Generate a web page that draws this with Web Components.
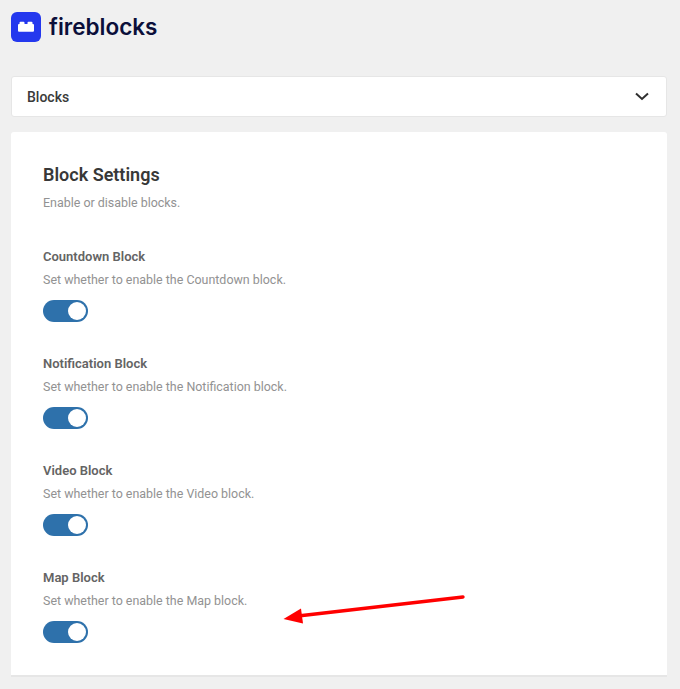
<!DOCTYPE html>
<html>
<head>
<meta charset="utf-8">
<title>Fireblocks</title>
<style>
    html, body { margin: 0; background: #f0f0f0; }
    body { font-family: Roboto, "Liberation Sans", sans-serif; }
</style>
</head>
<body>
<fb-page>
    <fb-logo></fb-logo>
    <fb-select label="Blocks"></fb-select>
    <fb-card heading="Block Settings" note="Enable or disable blocks.">
        <fb-toggle-row label="Countdown Block" note="Set whether to enable the Countdown block."></fb-toggle-row>
        <fb-toggle-row label="Notification Block" note="Set whether to enable the Notification block."></fb-toggle-row>
        <fb-toggle-row label="Video Block" note="Set whether to enable the Video block."></fb-toggle-row>
        <fb-toggle-row label="Map Block" note="Set whether to enable the Map block."></fb-toggle-row>
    </fb-card>
</fb-page>
<script>
class FbPage extends HTMLElement {
    constructor() {
        super();
        this.attachShadow({ mode: 'open' });
        this.shadowRoot.innerHTML = `
            <style>
                :host { display: flex; flex-direction: column; height: 689px; box-sizing: border-box; padding: 12px 13px 0 11px; position: relative; overflow: hidden; }
                svg { position: absolute; left: 0; top: 0; pointer-events: none; }
            </style>
            <slot></slot>
            <svg width="680" height="689" viewBox="0 0 680 689">
                <path d="M463 597 L298 616" stroke="#ff0000" stroke-width="3.4" stroke-linecap="round" fill="none"/>
                <path d="M283.500 619 L301 608.500 L303 623.500 Z" fill="#ff0000"/>
            </svg>
        `;
    }
}
customElements.define('fb-page', FbPage);

class FbLogo extends HTMLElement {
    constructor() {
        super();
        this.attachShadow({ mode: 'open' });
        this.shadowRoot.innerHTML = `
            <style>
                :host { display: flex; align-items: center; gap: 8px; height: 30px; }
                span { font: 600 22.500px/30px Inter, "Noto Sans", sans-serif; color: #0b0f3a; }
                svg { display: block; }
            </style>
            <svg width="30" height="30" viewBox="0 0 30 30">
                <rect width="30" height="30" rx="6" fill="#2438ee"/>
                <path d="M7 13 Q7 12 8 12 H8.500 V10.700 Q8.500 9.700 9.500 9.700 H12.500 Q13.500 9.700 13.500 10.700 V12 H16.500 V10.700 Q16.500 9.700 17.500 9.700 H20.500 Q21.500 9.700 21.500 10.700 V12 H22 Q23 12 23 13 V18.700 Q23 19.700 22 19.700 H8 Q7 19.700 7 18.700 Z" fill="#fff"/>
            </svg>
            <span>fireblocks</span>
        `;
    }
}
customElements.define('fb-logo', FbLogo);

class FbSelect extends HTMLElement {
    constructor() {
        super();
        this.attachShadow({ mode: 'open' });
        this.shadowRoot.innerHTML = `
            <style>
                :host { display: flex; align-items: center; justify-content: space-between; box-sizing: border-box; height: 41px; margin-top: 34px; padding: 0 17px 0 15px; background: #fff; border: 1px solid #e6e6e6; border-radius: 3px; }
                span { font: 500 14px/1 Roboto, sans-serif; color: #3a3a3a; }
                svg { display: block; }
            </style>
            <span>${this.getAttribute('label')}</span>
            <svg width="14" height="9" viewBox="0 0 14 9"><path d="M1 1.500 L7 7 L13 1.500" fill="none" stroke="#2f2f2f" stroke-width="2"/></svg>
        `;
    }
}
customElements.define('fb-select', FbSelect);

class FbCard extends HTMLElement {
    constructor() {
        super();
        this.attachShadow({ mode: 'open' });
        this.shadowRoot.innerHTML = `
            <style>
                :host { display: block; box-sizing: border-box; height: 545px; margin-top: 15px; padding: 32px; background: #fff; border-radius: 3px 3px 0 0; border-bottom: 2px solid #e6e6e6; }
                h2 { margin: 0; font: 600 18px/22px Roboto, sans-serif; color: #383838; }
                p { margin: 7px 0 0; font: 400 12.450px/20px Roboto, sans-serif; color: #929292; }
                .rows { display: flex; flex-direction: column; gap: 27px; margin-top: 34px; }
            </style>
            <h2>${this.getAttribute('heading')}</h2>
            <p>${this.getAttribute('note')}</p>
            <div class="rows"><slot></slot></div>
        `;
    }
}
customElements.define('fb-card', FbCard);

class FbToggleRow extends HTMLElement {
    constructor() {
        super();
        this.attachShadow({ mode: 'open' });
        this.shadowRoot.innerHTML = `
            <style>
                :host { display: block; height: 80px; }
                strong { display: block; font: 600 13px/20px Roboto, sans-serif; color: #646464; }
                span { display: block; margin-top: 3px; font: 400 12.450px/20px Roboto, sans-serif; color: #929292; }
                .toggle { display: flex; justify-content: flex-end; align-items: center; box-sizing: border-box; width: 45px; height: 22px; margin-top: 10px; padding: 2px; background: #2e71ab; border-radius: 11px; }
                .toggle i { display: block; width: 18px; height: 18px; background: #fff; border-radius: 50%; }
            </style>
            <strong>${this.getAttribute('label')}</strong>
            <span>${this.getAttribute('note')}</span>
            <div class="toggle"><i></i></div>
        `;
    }
}
customElements.define('fb-toggle-row', FbToggleRow);
</script>
</body>
</html>
